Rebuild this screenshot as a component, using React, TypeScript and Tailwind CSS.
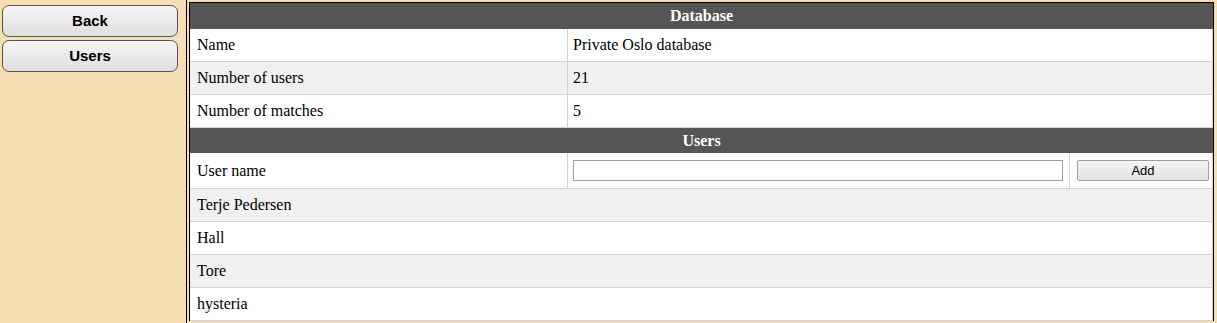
import React from 'react';

const info = [
  { label: 'Name', value: 'Private Oslo database' },
  { label: 'Number of users', value: '21' },
  { label: 'Number of matches', value: '5' },
];

const users = ['Terje Pedersen', 'Hall', 'Tore', 'hysteria'];

function SideButton({ children }: { children: React.ReactNode }) {
  return (
    <button className="block w-[176px] h-[32px] rounded-[7px] border border-[#555] bg-gradient-to-b from-[#f6f6f6] to-[#dedede] text-[15px] font-bold text-black font-['Liberation_Sans',Arial,sans-serif]">
      {children}
    </button>
  );
}

export default function App() {
  return (
    <div className="flex w-[1217px] h-[323px] overflow-hidden bg-[#f5deb3] font-['Liberation_Serif','Times_New_Roman',serif] text-[16px] text-black">
      <aside className="w-[187px] shrink-0 border-r border-black pl-[2px] pt-[5px] flex flex-col gap-[3px]">
        <SideButton>Back</SideButton>
        <SideButton>Users</SideButton>
      </aside>
      <main className="ml-[2px] mt-[2px] w-[1025px] border-l border-t border-r border-black bg-white self-start">
        <div className="h-[26px] bg-[#555555] text-white font-bold flex items-center justify-center">Database</div>
        <div className="border-r border-[#d3d3d3]">
          {info.map((row, i) => (
            <div
              key={row.label}
              className={`flex h-[33px] border-b border-[#d3d3d3] ${i % 2 === 1 ? 'bg-[#f0f0f0]' : 'bg-white'}`}
            >
              <div className="w-[378px] border-r border-[#d3d3d3] pl-[7px] flex items-center">{row.label}</div>
              <div className="flex-1 pl-[5px] flex items-center">{row.value}</div>
            </div>
          ))}
        </div>
        <div className="h-[25px] bg-[#555555] text-white font-bold flex items-center justify-center">Users</div>
        <div className="border-r border-[#d3d3d3]">
          <div className="flex h-[36px] border-b border-[#d3d3d3] bg-white">
            <div className="w-[378px] border-r border-[#d3d3d3] pl-[7px] flex items-center">User name</div>
            <div className="w-[502px] border-r border-[#d3d3d3] pl-[5px] pr-[6px] flex items-center">
              <input className="w-full h-[21px] border border-[#a0a0a0] bg-white outline-none" />
            </div>
            <div className="flex-1 pl-[7px] pr-[2px] flex items-center">
              <button className="w-[132px] h-[21px] border border-[#a0a0a0] rounded-[2px] bg-gradient-to-b from-[#f4f4f4] to-[#e2e2e2] text-[13px] font-['Liberation_Sans',Arial,sans-serif] text-black">
                Add
              </button>
            </div>
          </div>
          {users.map((name, i) => (
            <div
              key={name}
              className={`h-[33px] border-b border-[#d3d3d3] pl-[7px] flex items-center ${i % 2 === 0 ? 'bg-[#f0f0f0]' : 'bg-white'}`}
            >
              {name}
            </div>
          ))}
        </div>
      </main>
    </div>
  );
}
